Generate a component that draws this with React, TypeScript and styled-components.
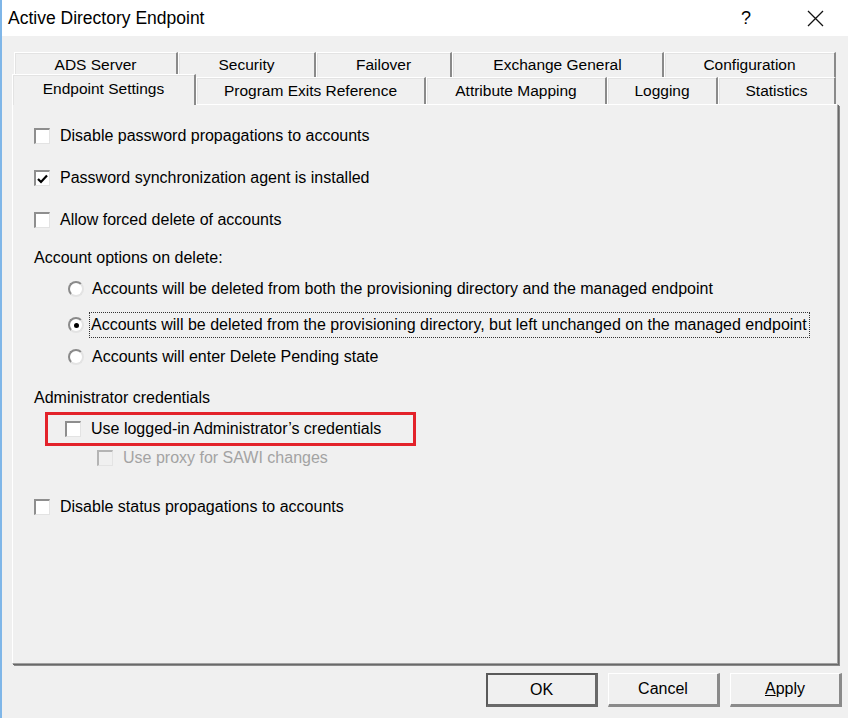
import React from 'react';
import styled, { createGlobalStyle } from 'styled-components';

const GlobalStyle = createGlobalStyle`
  html, body {
    margin: 0;
    padding: 0;
    background: #f0f0f0;
  }
  body {
    font-family: 'Liberation Sans', Arial, sans-serif;
    font-size: 16px;
    color: #000;
  }
`;

const Window = styled.div`
  width: 848px;
  height: 718px;
  box-sizing: border-box;
  border-left: 2px solid #7fb6e8;
  background: #f0f0f0;
  display: flex;
  flex-direction: column;
`;

const TitleBar = styled.div`
  height: 36px;
  background: #fff;
  display: flex;
  align-items: center;
  padding-left: 6px;
  font-size: 17.5px;
`;

const Title = styled.div`
  flex: 1;
`;

const Caption = styled.div<{ $w: number; $gap?: number }>`
  width: ${({ $w }) => $w}px;
  margin-right: ${({ $gap }) => $gap ?? 0}px;
  display: flex;
  justify-content: center;
  align-items: center;
  font-size: 18px;
`;

const Body = styled.div`
  flex: 1;
  display: flex;
  flex-direction: column;
  padding: 16px 0 0 10px;
`;

const TabRow = styled.div<{ $h: number; $left: number }>`
  display: flex;
  height: ${({ $h }) => $h}px;
  padding-left: ${({ $left }) => $left}px;
  align-items: flex-end;
`;

const Tab = styled.div<{ $w: number; $active?: boolean }>`
  width: ${({ $w }) => $w}px;
  height: ${({ $active }) => ($active ? '31px' : '100%')};
  box-sizing: border-box;
  margin-bottom: ${({ $active }) => ($active ? -1 : 0)}px;
  position: relative;
  z-index: ${({ $active }) => ($active ? 2 : 1)};
  background: #f0f0f0;
  border-top: 1px solid #fff;
  border-left: 1px solid #fff;
  border-right: 2px solid #8a8a8a;
  box-shadow: inset 0 1px 0 #e3e3e3, inset 1px 0 0 #e3e3e3;
  display: flex;
  align-items: ${({ $active }) => ($active ? 'flex-start' : 'center')};
  padding-top: ${({ $active }) => ($active ? 5 : 0)}px;
  justify-content: center;
  white-space: nowrap;
  font-size: 15.5px;
`;

const Panel = styled.div`
  width: 826px;
  height: 560px;
  box-sizing: border-box;
  border-top: 1px solid #fff;
  border-left: 1px solid #fff;
  border-right: 1px solid #a0a0a0;
  border-bottom: 1px solid #a0a0a0;
  box-shadow: 1px 1px 0 #696969, 2px 2px 0 #8a8a8a;
  padding: 21px 0 0 21px;
  display: flex;
  flex-direction: column;
`;

const Row = styled.div<{ $top: number; $indent?: number; $disabled?: boolean }>`
  display: flex;
  align-items: center;
  height: 20px;
  margin-top: ${({ $top }) => $top}px;
  margin-left: ${({ $indent }) => $indent ?? 0}px;
  color: ${({ $disabled }) => ($disabled ? '#a3a3a3' : '#000')};
  white-space: nowrap;
`;

const GroupLabel = styled.div<{ $top: number }>`
  height: 20px;
  line-height: 20px;
  margin-top: ${({ $top }) => $top}px;
`;

const Box = styled.span<{ $disabled?: boolean }>`
  width: 16px;
  height: 16px;
  box-sizing: border-box;
  flex: none;
  background: ${({ $disabled }) => ($disabled ? '#f0f0f0' : '#fff')};
  border-top: 2px solid ${({ $disabled }) => ($disabled ? '#b4b4b4' : '#8e8e8e')};
  border-left: 2px solid ${({ $disabled }) => ($disabled ? '#b4b4b4' : '#8e8e8e')};
  border-right: 1px solid #e3e3e3;
  border-bottom: 1px solid #e3e3e3;
  margin-right: 10px;
  display: flex;
  align-items: center;
  justify-content: center;
`;

const Radio = styled.span`
  width: 16px;
  height: 16px;
  box-sizing: border-box;
  flex: none;
  border-radius: 50%;
  background: #fff;
  border: 2px solid;
  border-color: #8a8a8a #e3e3e3 #e3e3e3 #8a8a8a;
  margin-right: 8px;
  display: flex;
  align-items: center;
  justify-content: center;
`;

const Dot = styled.span`
  width: 5px;
  height: 5px;
  border-radius: 50%;
  background: #000;
`;

const Focus = styled.span`
  outline: 1px dotted #333;
  outline-offset: 0;
  padding: 3px 2px 3px 1px;
  margin-left: -2px;
`;

const Highlight = styled.div`
  margin: 4px 0 0 11px;
  width: 371px;
  height: 34px;
  box-sizing: border-box;
  border: 3px solid #e3222a;
  display: flex;
  align-items: center;
  padding-left: 17px;
`;

const Buttons = styled.div`
  display: flex;
  justify-content: flex-end;
  gap: 10px;
  padding: 9px 6px 0 0;
`;

const Button = styled.button<{ $default?: boolean }>`
  width: 112px;
  height: 34px;
  box-sizing: border-box;
  background: #f0f0f0;
  font-family: 'Liberation Sans', Arial, sans-serif;
  font-size: 16px;
  color: #000;
  padding: 0;
  border-style: solid;
  border-width: ${({ $default }) => ($default ? '2px 3px 3px 2px' : '1px 3px 3px 1px')};
  border-color: ${({ $default }) =>
    $default ? '#5a5a5a #696969 #696969 #5a5a5a' : '#fff #8a8a8a #8a8a8a #fff'};
`;

const Check = () => (
  <svg width="11" height="10" viewBox="0 0 11 10">
    <path d="M1 5 L4 8 L10 1.5" fill="none" stroke="#000" strokeWidth="2.2" />
  </svg>
);

const Close = () => (
  <svg width="17" height="17" viewBox="0 0 17 17">
    <path d="M1 1 L16 16 M16 1 L1 16" stroke="#111" strokeWidth="1.3" />
  </svg>
);

const backTabs: [string, number][] = [
  ['ADS Server', 164],
  ['Security', 138],
  ['Failover', 136],
  ['Exchange General', 212],
  ['Configuration', 172],
];

const frontTabs: [string, number][] = [
  ['Endpoint Settings', 184],
  ['Program Exits Reference', 230],
  ['Attribute Mapping', 181],
  ['Logging', 111],
  ['Statistics', 118],
];

const App: React.FC = () => {
  return (
    <>
      <GlobalStyle />
      <Window>
        <TitleBar>
          <Title>Active Directory Endpoint</Title>
          <Caption $w={40} $gap={16}>?</Caption>
          <Caption $w={66}>
            <Close />
          </Caption>
        </TitleBar>
        <Body>
          <TabRow $h={25} $left={2}>
            {backTabs.map(([label, w]) => (
              <Tab key={label} $w={w}>
                {label}
              </Tab>
            ))}
          </TabRow>
          <TabRow $h={27} $left={0}>
            {frontTabs.map(([label, w], i) => (
              <Tab key={label} $w={w} $active={i === 0}>
                {label}
              </Tab>
            ))}
          </TabRow>
          <Panel>
            <Row $top={0}>
              <Box />
              Disable password propagations to accounts
            </Row>
            <Row $top={22}>
              <Box>
                <Check />
              </Box>
              Password synchronization agent is installed
            </Row>
            <Row $top={22}>
              <Box />
              Allow forced delete of accounts
            </Row>
            <GroupLabel $top={18}>Account options on delete:</GroupLabel>
            <Row $top={11} $indent={34}>
              <Radio />
              Accounts will be deleted from both the provisioning directory and the managed endpoint
            </Row>
            <Row $top={16} $indent={34}>
              <Radio>
                <Dot />
              </Radio>
              <Focus>
                Accounts will be deleted from the provisioning directory, but left unchanged on the
                managed endpoint
              </Focus>
            </Row>
            <Row $top={12} $indent={34}>
              <Radio />
              Accounts will enter Delete Pending state
            </Row>
            <GroupLabel $top={21}>Administrator credentials</GroupLabel>
            <Highlight>
              <Box />
              Use logged-in Administrator’s credentials
            </Highlight>
            <Row $top={2} $indent={63} $disabled>
              <Box $disabled />
              Use proxy for SAWI changes
            </Row>
            <Row $top={29}>
              <Box />
              Disable status propagations to accounts
            </Row>
          </Panel>
          <Buttons>
            <Button $default>OK</Button>
            <Button>Cancel</Button>
            <Button>
              <u>A</u>pply
            </Button>
          </Buttons>
        </Body>
      </Window>
    </>
  );
};

export default App;
